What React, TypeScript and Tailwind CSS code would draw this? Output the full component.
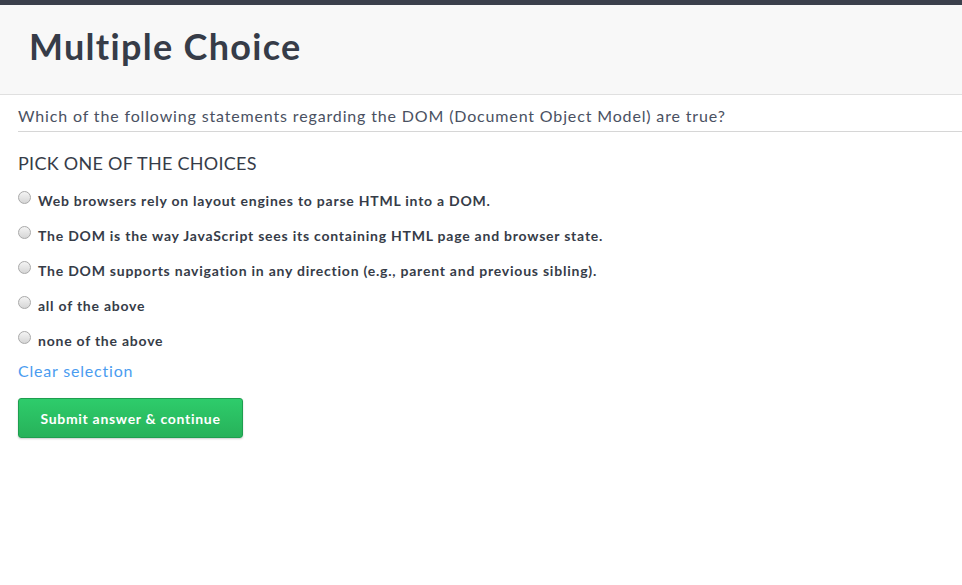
import React from "react";

const options = [
  "Web browsers rely on layout engines to parse HTML into a DOM.",
  "The DOM is the way JavaScript sees its containing HTML page and browser state.",
  "The DOM supports navigation in any direction (e.g., parent and previous sibling).",
  "all of the above",
  "none of the above",
];

export default function App() {
  return (
    <div className="w-[962px] h-[585px] bg-white overflow-hidden" style={{ fontFamily: "Lato, 'Open Sans', sans-serif" }}>
      <div className="h-[5px] bg-[#3b404c]" />
      <div className="h-[90px] bg-[#f8f8f8] border-b border-[#e0e0e0] pl-[29px] pt-[19px]">
        <h1 className="text-[36px] leading-[44px] font-bold tracking-[1.3px] text-[#363c48]">Multiple Choice</h1>
      </div>
      <div className="pl-[18px]">
        <div className="border-b border-[#d6d6d6] pt-[10px] pb-[5px] text-[16px] leading-[21px] tracking-[0.85px] text-[#4a5162]">
          Which of the following statements regarding the DOM (Document Object Model) are true?
        </div>
        <div className="pt-[20px] text-[18px] leading-[22px] tracking-[0.27px] text-[#363c48]">PICK ONE OF THE CHOICES</div>
        <div className="flex flex-col gap-[15px] pt-[16px]">
          {options.map((o) => (
            <label key={o} className="flex items-start gap-[7px] h-[20px]">
              <span className="mt-[1px] w-[13px] h-[13px] rounded-full border border-[#a9a9a9] bg-gradient-to-b from-[#f4f4f4] to-[#d6d6d6] shrink-0" />
              <span className="text-[14px] leading-[20px] font-bold tracking-[0.77px] text-[#363c48] mt-[1px]">{o}</span>
            </label>
          ))}
        </div>
        <div className="pt-[11px] text-[16px] leading-[20px] tracking-[0.8px] text-[#4a9cf0]">Clear selection</div>
        <button className="mt-[17px] w-[225px] h-[40px] rounded-[3px] border border-[#1e9e4f] bg-gradient-to-b from-[#2ecc6b] to-[#27b25a] text-white text-[14px] font-bold tracking-[0.7px] shadow-[0_1px_2px_rgba(0,0,0,0.2)]">
          Submit answer &amp; continue
        </button>
      </div>
    </div>
  );
}
